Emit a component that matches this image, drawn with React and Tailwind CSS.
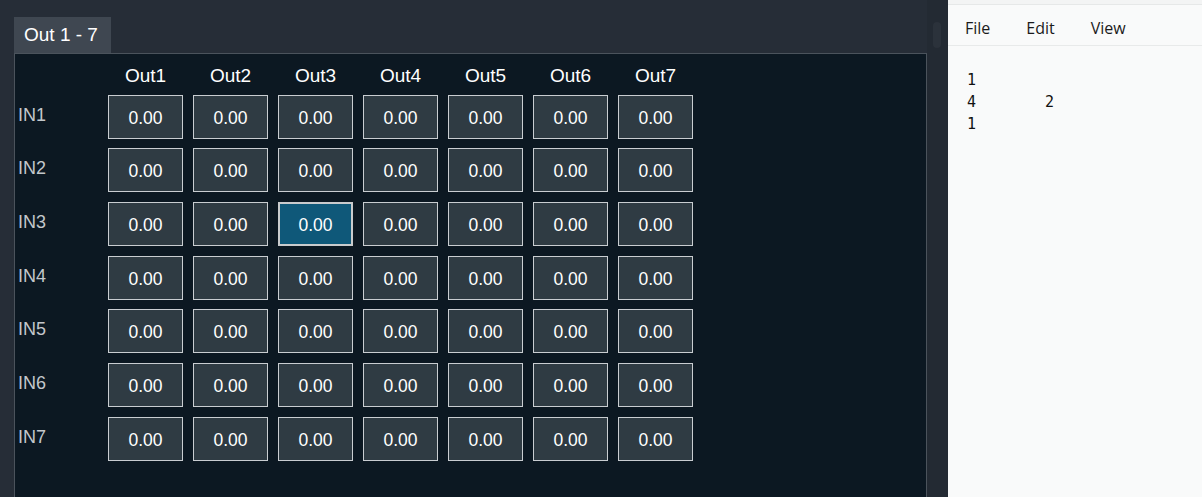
const outs = ["Out1", "Out2", "Out3", "Out4", "Out5", "Out6", "Out7"];
const ins = ["IN1", "IN2", "IN3", "IN4", "IN5", "IN6", "IN7"];

function Cell({ active }) {
  return (
    <div
      className={
        active
          ? "h-[44px] flex items-center justify-center pt-[2px] bg-[#0f5879] border-2 border-[#c9cbcd] text-white text-[17.5px]"
          : "h-[44px] flex items-center justify-center pt-[2px] bg-[#2f3b43] border border-[#c9cdd1] text-white text-[17.5px]"
      }
    >
      0.00
    </div>
  );
}

export default function App() {
  return (
    <div className="flex w-[1202px] h-[497px] overflow-hidden font-['Liberation_Sans',Arial,sans-serif]">
      {/* left: matrix area */}
      <div className="flex w-[948px] bg-[#262d37]">
        <div className="flex flex-col w-[927px] pl-[14px] pt-[17px]">
          <div className="w-[97px] h-[36px] bg-[#3f4751] text-white text-[19px] flex items-center pl-[10px]">
            Out 1 - 7
          </div>
          <div className="flex-1 bg-[#0c1822] border border-[#4b535c] border-b-0 pl-[3px]">
            <div className="grid grid-cols-[80px_repeat(7,75px)] gap-x-[10px] gap-y-[9.7px]">
              <div className="h-[31px]" />
              {outs.map((o) => (
                <div key={o} className="h-[31px] flex items-end justify-center text-white text-[19px] leading-[18px]">
                  {o}
                </div>
              ))}
              {ins.map((r, ri) => (
                <>
                  <div key={r} className="text-[#c3c7cb] text-[18px] pt-[7px]">
                    {r}
                  </div>
                  {outs.map((o, ci) => (
                    <Cell key={r + o} active={ri === 2 && ci === 2} />
                  ))}
                </>
              ))}
            </div>
          </div>
        </div>
        {/* scrollbar gutter */}
        <div className="flex-1 bg-[#232a33] pt-[22px] pl-[6px]">
          <div className="w-[8px] h-[26px] rounded-sm bg-[#2b323b]" />
        </div>
      </div>

      {/* right: notepad */}
      <div className="flex-1 flex flex-col bg-[#f9fafa]">
        <div className="h-[5px] border-b border-[#e6e8e8] bg-[#f3f4f4]" />
        <div className="h-[41px] flex items-center border-b border-[#e8eaea] pl-[17px] pt-[5px] gap-[36px] text-[16px] text-[#1b1b1b] font-['Open_Sans',sans-serif]">
          <span>File</span>
          <span>Edit</span>
          <span>View</span>
        </div>
        <div className="pt-[23px] pl-[19px] text-[15px] leading-[22px] text-[#111] font-['DejaVu_Sans_Mono',monospace]">
          <div>1</div>
          <div className="flex">
            <span className="w-[78px]">4</span>
            <span>2</span>
          </div>
          <div>1</div>
        </div>
      </div>
    </div>
  );
}
